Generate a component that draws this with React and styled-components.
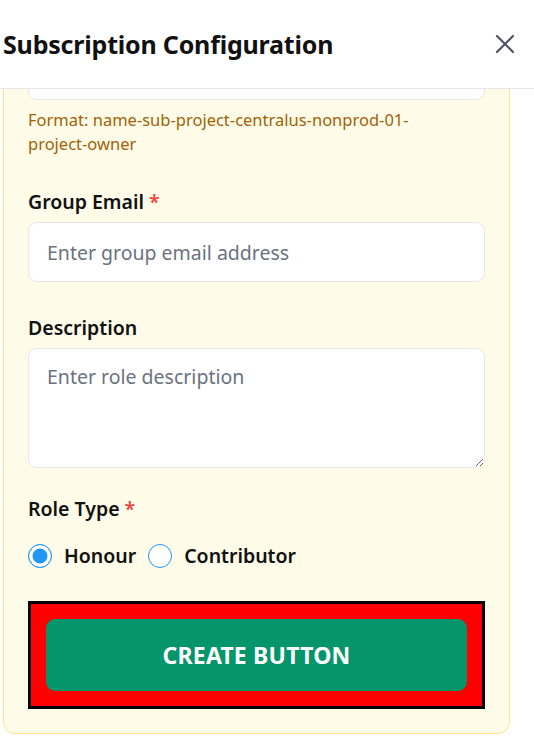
import { useLayoutEffect, useRef, useState } from "react";
import styled, { createGlobalStyle } from "styled-components";

const GlobalStyle = createGlobalStyle`
  html, body {
    margin: 0;
    padding: 0;
    background: #ffffff;
  }
  body {
    font-family: "Noto Sans", "Open Sans", sans-serif;
    color: #111827;
  }
  * {
    box-sizing: border-box;
  }
`;

const Panel = styled.div`
  display: flex;
  flex-direction: column;
  width: 534px;
  height: 100vh;
  background: #fff;
`;

const Header = styled.header`
  display: flex;
  justify-content: space-between;
  align-items: center;
  height: 89px;
  padding: 0 19px 0 3px;
  border-bottom: 1px solid #e5e7eb;
  flex-shrink: 0;
`;

const Title = styled.h2`
  margin: 0;
  font-size: 25px;
  font-weight: 700;
  color: #111;
  letter-spacing: -0.2px;
`;

const CloseButton = styled.button`
  display: flex;
  align-items: center;
  justify-content: center;
  width: 20px;
  height: 20px;
  padding: 0;
  border: none;
  background: none;
  color: #4b5563;
  cursor: pointer;
`;

const Scroller = styled.div`
  flex: 1;
  overflow-y: auto;
  padding: 16px 24px 24px 3px;
  scrollbar-width: none;

  &::-webkit-scrollbar {
    display: none;
  }
`;

const Card = styled.form`
  display: flex;
  flex-direction: column;
  gap: 32px;
  padding: 24px;
  background: #fefce8;
  border: 1px solid #fde68a;
  border-radius: 12px;
`;

const Field = styled.div`
  display: flex;
  flex-direction: column;
  margin-top: ${(p) => p.$pull || 0}px;
`;

const Label = styled.label`
  font-size: 19.5px;
  line-height: 27px;
  font-weight: 600;
  color: #111;
  margin-bottom: ${(p) => p.$gap || 7}px;
`;

const Required = styled.span`
  color: #ef4444;
  margin-left: 5px;
`;

const TextInput = styled.input`
  height: 60px;
  width: 100%;
  padding: 0 18px;
  border: 1px solid #e5e7eb;
  border-radius: 9px;
  background: #fff;
  font-family: inherit;
  font-size: 19.5px;
  color: #111827;
  outline: none;

  &::placeholder {
    color: #6b7280;
  }
`;

const TextArea = styled.textarea`
  display: block;
  height: 120px;
  width: 100%;
  padding: 14px 18px;
  border: 1px solid #e5e7eb;
  border-radius: 9px;
  background: #fff;
  font-family: inherit;
  font-size: 19.5px;
  line-height: 28px;
  color: #111827;
  outline: none;
  resize: vertical;

  &::placeholder {
    color: #6b7280;
  }
`;

const Hint = styled.p`
  margin: 8px 0 0;
  max-width: 420px;
  font-size: 16.5px;
  line-height: 24px;
  color: #a16207;
`;

const RadioRow = styled.div`
  display: flex;
  align-items: center;
  gap: 12px;
`;

const RadioOption = styled.label`
  display: flex;
  align-items: center;
  gap: 12px;
  font-size: 19.5px;
  font-weight: 600;
  color: #111;
  cursor: pointer;
`;

const Radio = styled.input`
  appearance: none;
  margin: 0;
  width: 24px;
  height: 24px;
  border: 1.5px solid #2196f3;
  border-radius: 50%;
  background: #fff;
  cursor: pointer;

  &:checked {
    background: #2196f3;
    box-shadow: inset 0 0 0 3.5px #fff;
  }
`;

const ButtonFrame = styled.div`
  padding: 15px;
  background: #ff0000;
  border: 3px solid #000;
`;

const SubmitButton = styled.button`
  display: block;
  width: 100%;
  height: 72px;
  border: none;
  border-radius: 9px;
  background: #05956a;
  color: #fff;
  font-family: inherit;
  font-size: 23px;
  font-weight: 700;
  letter-spacing: 0.2px;
  cursor: pointer;
`;

function XIcon() {
  return (
    <svg width="20" height="20" viewBox="0 0 20 20" fill="none">
      <path d="M2 2L18 18M18 2L2 18" stroke="currentColor" strokeWidth="2.2" strokeLinecap="round" />
    </svg>
  );
}

export default function App() {
  const scrollRef = useRef(null);
  const nameRef = useRef(null);
  const [roleType, setRoleType] = useState("honour");

  // the panel is shown scrolled down a little, with the name field mostly out of view
  useLayoutEffect(() => {
    const box = scrollRef.current;
    const input = nameRef.current;
    if (!box || !input) return;
    const diff = input.getBoundingClientRect().bottom - box.getBoundingClientRect().top - 11;
    box.scrollTop += diff;
  }, []);

  return (
    <>
      <GlobalStyle />
      <Panel>
        <Header>
          <Title>Subscription Configuration</Title>
          <CloseButton type="button" aria-label="Close">
            <XIcon />
          </CloseButton>
        </Header>
        <Scroller ref={scrollRef}>
          <Card onSubmit={(e) => e.preventDefault()}>
            <Field>
              <Label htmlFor="role-name">
                Role Name<Required>*</Required>
              </Label>
              <TextInput id="role-name" ref={nameRef} placeholder="Enter role name" />
              <Hint>Format: name-sub-project-centralus-nonprod-01-project-owner</Hint>
            </Field>
            <Field>
              <Label htmlFor="group-email">
                Group Email<Required>*</Required>
              </Label>
              <TextInput id="group-email" type="email" placeholder="Enter group email address" />
            </Field>
            <Field>
              <Label htmlFor="description">Description</Label>
              <TextArea id="description" placeholder="Enter role description" />
            </Field>
            <Field $pull={-5}>
              <Label $gap={20}>
                Role Type<Required>*</Required>
              </Label>
              <RadioRow>
                <RadioOption>
                  <Radio
                    type="radio"
                    name="roleType"
                    checked={roleType === "honour"}
                    onChange={() => setRoleType("honour")}
                  />
                  Honour
                </RadioOption>
                <RadioOption>
                  <Radio
                    type="radio"
                    name="roleType"
                    checked={roleType === "contributor"}
                    onChange={() => setRoleType("contributor")}
                  />
                  Contributor
                </RadioOption>
              </RadioRow>
            </Field>
            <ButtonFrame>
              <SubmitButton type="submit">CREATE BUTTON</SubmitButton>
            </ButtonFrame>
          </Card>
        </Scroller>
      </Panel>
    </>
  );
}
